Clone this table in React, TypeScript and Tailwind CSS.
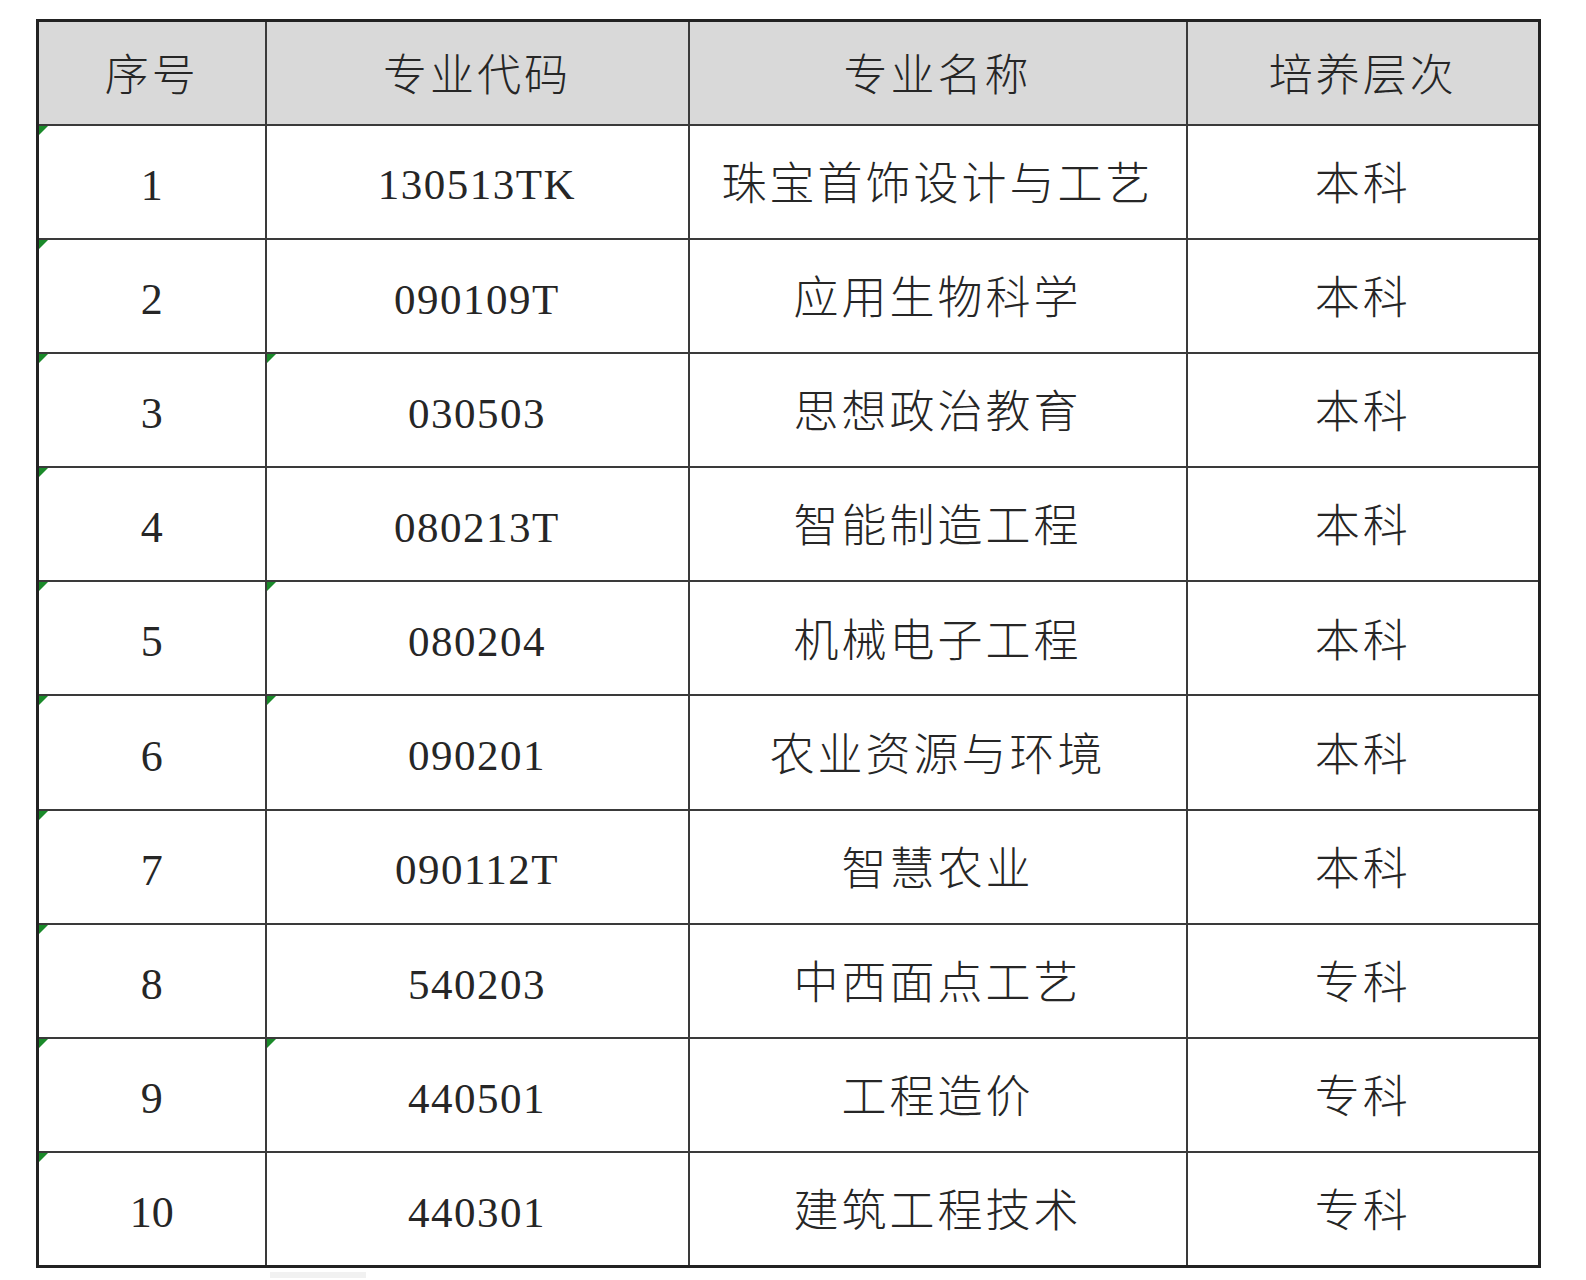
const rows: Array<{ no: string; code: string; name: string; level: string; codeFlag?: boolean }> = [
  { no: '1', code: '130513TK', name: '珠宝首饰设计与工艺', level: '本科' },
  { no: '2', code: '090109T', name: '应用生物科学', level: '本科' },
  { no: '3', code: '030503', name: '思想政治教育', level: '本科', codeFlag: true },
  { no: '4', code: '080213T', name: '智能制造工程', level: '本科' },
  { no: '5', code: '080204', name: '机械电子工程', level: '本科', codeFlag: true },
  { no: '6', code: '090201', name: '农业资源与环境', level: '本科', codeFlag: true },
  { no: '7', code: '090112T', name: '智慧农业', level: '本科' },
  { no: '8', code: '540203', name: '中西面点工艺', level: '专科' },
  { no: '9', code: '440501', name: '工程造价', level: '专科', codeFlag: true },
  { no: '10', code: '440301', name: '建筑工程技术', level: '专科' },
]

const font = { fontFamily: '"Liberation Serif", "Noto Sans CJK SC", serif' }

function Flag() {
  return <span className="absolute left-0 top-0 w-0 h-0 border-t-[9px] border-r-[9px] border-t-[#1a8a2a] border-r-transparent" />
}

const cell = "relative border-2 border-[#3a3a3a] text-center align-middle p-0 pt-[8px]"

export default function App() {
  return (
    <div className="w-[1586px] h-[1280px] bg-white pt-[19px] pl-[36px]" style={font}>
      <table className="border-collapse table-fixed w-[1502px] text-[#262626] border-[3px] border-[#222]">
        <colgroup>
          <col className="w-[228px]" />
          <col className="w-[423px]" />
          <col className="w-[498px]" />
          <col className="w-[353px]" />
        </colgroup>
        <thead>
          <tr className="h-[104px] bg-[#d9d9d9] text-[44px]">
            <th className={`${cell} font-light tracking-[3px]`}>序号</th>
            <th className={`${cell} font-light tracking-[3px]`}>专业代码</th>
            <th className={`${cell} font-light tracking-[3px]`}>专业名称</th>
            <th className={`${cell} font-light tracking-[3px]`}>培养层次</th>
          </tr>
        </thead>
        <tbody>
          {rows.map((r) => (
            <tr key={r.no} className="h-[114.2px]">
              <td className={`${cell} text-[44px]`}><Flag />{r.no}</td>
              <td className={`${cell} text-[43px] tracking-[1.5px]`}>{r.codeFlag && <Flag />}{r.code}</td>
              <td className={`${cell} text-[45px] font-light tracking-[3px]`}>{r.name}</td>
              <td className={`${cell} text-[45px] font-light tracking-[3px]`}>{r.level}</td>
            </tr>
          ))}
        </tbody>
      </table>
      <div className="ml-[234px] mt-[4px] w-[96px] h-[6px] bg-[#f1f1f1]" />
    </div>
  )
}
